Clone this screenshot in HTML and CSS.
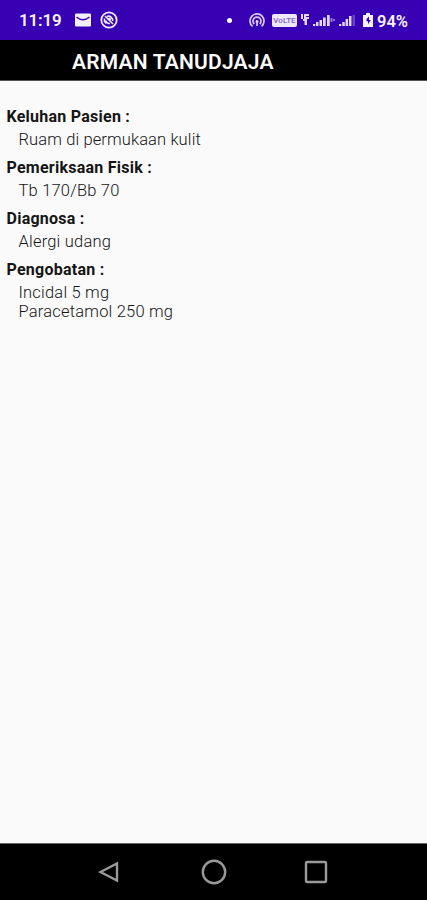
FILE: index.html
```html
<!DOCTYPE html>
<html lang="id">
<head>
<meta charset="utf-8">
<title>Arman Tanudjaja</title>
<link rel="stylesheet" href="styles.css">
</head>
<body>
<header class="status">
  <span class="clock">11:19</span>
  <svg class="mail" width="16" height="14" viewBox="0 0 16 14"><rect y=".5" width="16" height="13" rx="1" fill="#f4f0ff"/><path d="M1.500 4Q8 9.500 14.500 4" fill="none" stroke="#3700b3" stroke-width="1.500"/></svg>
  <svg class="blocked" width="18" height="18" viewBox="0 0 18 18" fill="none" stroke="#eee8ff"><circle cx="9" cy="9" r="7.700" stroke-width="1.800"/><path d="M5 5l8 8M6 9.500a3.500 3.500 0 0 0 4 3M7 5.500a4 4 0 0 1 5.500 4.500M4.500 7.500v3l2 2" stroke-width="1.600"/><circle cx="9.500" cy="8" r="1.600" fill="#eee8ff" stroke="none"/></svg>
  <span class="dot"></span>
  <svg class="hotspot" width="16" height="15" viewBox="0 0 16 15" fill="none" stroke="#d9ccff" stroke-width="1.700"><path d="M3.500 13.300a7 7 0 1 1 9 0M5.300 11a4 4 0 1 1 5.400 0"/><circle cx="8" cy="8.500" r="1.500" fill="#e8e0ff" stroke="none"/><path d="M8 9v4"/></svg>
  <span class="volte">VoLTE</span>
  <svg class="signals" width="55" height="16" viewBox="0 0 55 16" fill="#e1d6ff"><path d="M0 2h2v5H0zM3 2h5v2H5v1h3v2H6v6H3.500V9H2V7h1z"/><path d="M12 12h2.300v2H12zM15 10h2.500v4H15zM18.500 8H21v6h-2.500zM22 5.500h2.700V14H22zM26 3h2.700v11H26z"/><path d="M29.500 6h2v4h-2zM32 7h2v2h-2z" opacity=".55"/><path d="M38 12h2.300v2H38zM41.300 10h2.500v4h-2.500zM44.600 7h2.500v7h-2.500zM48 4h2.500v10H48z"/><path d="M51.500 3h2.500v11h-2.500z" opacity=".3"/></svg>
  <svg class="battery" width="10" height="14" viewBox="0 0 10 14"><path d="M3 0h4v2h3v12H0V2h3z" fill="#f5f1ff"/><path d="M6 3.500 3.500 6v2.200h1.500v3L7.800 7H6z" fill="#3700b3"/></svg>
  <span class="percent">94%</span>
</header>
<div class="toolbar"><h1>ARMAN TANUDJAJA</h1></div>
<main>
  <section><h2>Keluhan Pasien :</h2><p class="complaint">Ruam di permukaan kulit</p></section>
  <section><h2>Pemeriksaan Fisik :</h2><p>Tb 170/Bb 70</p></section>
  <section><h2>Diagnosa :</h2><p>Alergi udang</p></section>
  <section><h2>Pengobatan :</h2><p>Incidal 5 mg</p><p>Paracetamol 250 mg</p></section>
</main>
<nav>
  <svg width="24" height="28" viewBox="0 0 24 28"><path d="M3.500 14 20 5.500v17z"/></svg>
  <svg class="home" width="28" height="28" viewBox="0 0 28 28"><circle cx="14" cy="14" r="11.200"/></svg>
  <svg width="24" height="28" viewBox="0 0 24 28"><rect x="2" y="4" width="20" height="20" rx="1"/></svg>
</nav>
</body>
</html>
```
FILE: styles.css
```css
* { box-sizing: border-box; margin: 0; padding: 0; }
body {
  display: flex;
  flex-direction: column;
  height: 900px;
  overflow: hidden;
  background: #fafafa;
  color: #151515;
  font-family: Roboto, sans-serif;
}
svg { display: block; flex: none; }
.status {
  display: flex;
  align-items: center;
  flex: none;
  height: 40px;
  padding-left: 19px;
  background: #3700b3;
  color: #f6f2ff;
  font-size: 17px;
  font-weight: 600;
  white-space: nowrap;
}
.clock { width: 56px; letter-spacing: -.2px; }
.blocked { margin-left: 9px; }
.dot { width: 5px; height: 5px; margin-left: 109px; border-radius: 50%; background: #fff; }
.hotspot { margin-left: 17px; }
.volte {
  width: 25px;
  height: 13px;
  margin-left: 7px;
  border-radius: 2px;
  background: #eee8ff;
  color: #7d5fc9;
  font-size: 8px;
  font-weight: 500;
  line-height: 13px;
  text-align: center;
}
.signals { margin-left: 4px; }
.battery { margin-left: 7px; }
.percent { margin-left: 4px; padding-top: 2px; font-size: 16.5px; }
.toolbar {
  flex: none;
  height: 41px;
  padding-left: 72px;
  border-bottom: 1px solid #555;
  background: #000;
  color: #fafafa;
}
h1 {
  font-size: 21px;
  font-weight: 600;
  line-height: 44px;
  letter-spacing: .2px;
  white-space: nowrap;
}
main { flex: 1; padding: 26px 6.5px 0; }
section { height: 51px; }
h2 {
  height: 23px;
  font-size: 16px;
  font-weight: 700;
  line-height: 20px;
  letter-spacing: .25px;
}
p {
  height: 19px;
  padding-left: 12px;
  font-size: 16.5px;
  font-weight: 300;
  line-height: 19px;
  letter-spacing: .2px;
}
.complaint { letter-spacing: .12px; }
nav {
  display: flex;
  align-items: center;
  flex: none;
  height: 57px;
  padding-left: 97px;
  border-top: 1px solid #666;
  background: #000;
}
nav svg { fill: none; stroke: #999; stroke-width: 2.4; }
.home { margin: 0 76px 0 79px; }
```
